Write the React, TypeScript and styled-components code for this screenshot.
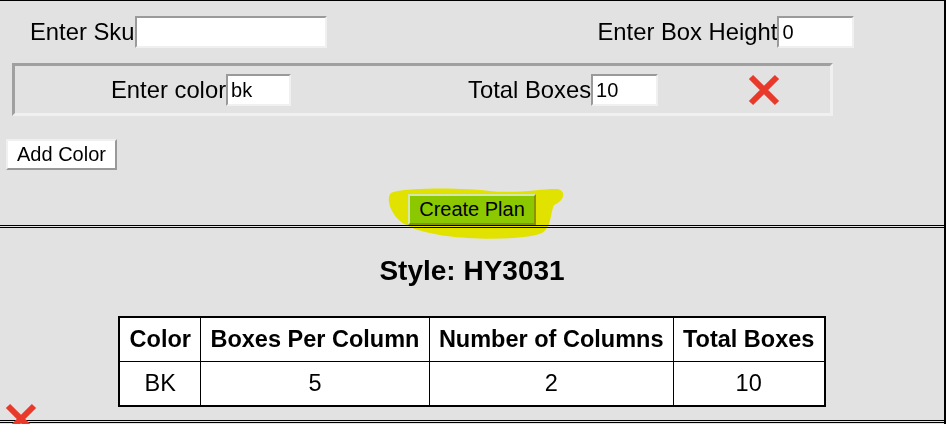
import React from "react";
import { createGlobalStyle, styled } from "styled-components";

const GlobalStyle = createGlobalStyle`
    html, body {
        margin: 0;
        padding: 0;
        background: #e2e2e2;
    }

    body {
        font-family: "Liberation Sans", Arial, sans-serif;
        color: #000;
    }
`;

const Page = styled.div`
    width: 946px;
    min-height: 424px;
    box-sizing: border-box;
    border-top: 1px solid #000;
    border-right: 2px solid #000;
    background: #e2e2e2;
`;

const FormSection = styled.section`
    position: relative;
    padding-top: 15px;
    border-bottom: 3px double #000;
`;

const Row = styled.div`
    display: flex;
    align-items: center;
    padding-left: 30px;
    gap: 271px;
`;

const Field = styled.label<{ $before?: number }>`
    display: flex;
    align-items: center;
    margin-left: ${(p) => p.$before ?? 0}px;
    font-size: 23.8px;
`;

const TextInput = styled.input<{ $w: number }>`
    width: ${(p) => p.$w}px;
    height: 32px;
    box-sizing: border-box;
    padding: 1px 3px;
    font: 20px "Liberation Sans", Arial, sans-serif;
    color: #000;
    background: #fff;
    border: 2px solid;
    border-color: #9a9a9a #f0f0f0 #f0f0f0 #9a9a9a;
    outline: none;
`;

const ColorBox = styled.div`
    display: flex;
    align-items: center;
    width: 821px;
    box-sizing: border-box;
    margin: 15px 0 0 12px;
    padding: 8px 0 7px 96px;
    border: 3px solid;
    border-color: #a0a0a0 #f0f0f0 #f0f0f0 #a0a0a0;
`;

const RemoveButton = styled.span<{ $before?: number }>`
    display: inline-flex;
    margin-left: ${(p) => p.$before ?? 0}px;
    cursor: pointer;
`;

const ButtonRow = styled.div<{ $top: number; $center?: boolean }>`
    display: flex;
    justify-content: ${(p) => (p.$center ? "center" : "flex-start")};
    margin-top: ${(p) => p.$top}px;
    padding-left: ${(p) => (p.$center ? 0 : 6)}px;
`;

const Button = styled.button`
    height: 31px;
    padding: 0 9px;
    font: 20px "Liberation Sans", Arial, sans-serif;
    color: #000;
    background: #fff;
    border: 2px solid;
    border-color: #f0f0f0 #999 #999 #f0f0f0;
`;

const PlanButton = styled(Button)`
    position: relative;
    z-index: 3;
    background: #8cc800;
    border-color: #d6e6b0 #8a9400 #8a9400 #d6e6b0;
`;

const Highlight = styled.svg`
    position: absolute;
    left: 386px;
    top: 183px;
    z-index: 2;
    mix-blend-mode: multiply;
    pointer-events: none;
`;

const PlanSection = styled.section`
    position: relative;
    padding: 27px 0 13px;
    border-bottom: 3px double #000;
`;

const PlanTitle = styled.h2`
    margin: 0;
    font-size: 28px;
    line-height: 32px;
    font-weight: bold;
    text-align: center;
`;

const PlanTable = styled.table`
    margin: 29px auto 0;
    border-collapse: collapse;
    border: 2px solid #000;
    background: #fff;
`;

const Cell = styled.td<{ $head?: boolean }>`
    border: 1px solid #000;
    padding: 0 9.25px;
    line-height: 43px;
    font-size: 23.5px;
    font-weight: ${(p) => (p.$head ? "bold" : "normal")};
    text-align: center;
    white-space: nowrap;
`;

const PlanRemove = styled.span`
    position: absolute;
    left: 4px;
    top: 175px;
    display: inline-flex;
`;

function RedX() {
    return (
        <svg width="34" height="32" viewBox="0 0 34 32">
            <path
                d="M4 3 L30 29 M30 3 L4 29"
                stroke="#e8392a"
                strokeWidth="6"
                fill="none"
            />
        </svg>
    );
}

const columns = ["Color", "Boxes Per Column", "Number of Columns", "Total Boxes"];
const rows = [["BK", "5", "2", "10"]];

export default function App() {
    return (
        <Page>
            <GlobalStyle />
            <FormSection>
                <Row>
                    <Field>
                        Enter Sku
                        <TextInput $w={192} defaultValue="" />
                    </Field>
                    <Field>
                        Enter Box Height
                        <TextInput $w={77} defaultValue="0" />
                    </Field>
                </Row>

                <ColorBox>
                    <Field>
                        Enter color
                        <TextInput $w={65} defaultValue="bk" />
                    </Field>
                    <Field $before={177}>
                        Total Boxes
                        <TextInput $w={67} defaultValue="10" />
                    </Field>
                    <RemoveButton $before={89}>
                        <RedX />
                    </RemoveButton>
                </ColorBox>

                <ButtonRow $top={23}>
                    <Button>Add Color</Button>
                </ButtonRow>

                <ButtonRow $top={24} $center>
                    <PlanButton>Create Plan</PlanButton>
                </ButtonRow>

                <Highlight width="182" height="60" viewBox="0 0 182 60">
                    <path
                        d="M5 9 C20 3 80 4 104 7 S160 4 172 5 C180 7 179 16 168 21 C164 30 166 42 156 49 C140 56 90 56 60 52 C40 49 20 44 12 35 C4 27 0 14 5 9 Z"
                        fill="#ffff00"
                    />
                </Highlight>
            </FormSection>

            <PlanSection>
                <PlanTitle>Style: HY3031</PlanTitle>
                <PlanTable>
                    <thead>
                        <tr>
                            {columns.map((c) => (
                                <Cell as="th" $head key={c}>
                                    {c}
                                </Cell>
                            ))}
                        </tr>
                    </thead>
                    <tbody>
                        {rows.map((r, i) => (
                            <tr key={i}>
                                {r.map((v, j) => (
                                    <Cell key={j}>{v}</Cell>
                                ))}
                            </tr>
                        ))}
                    </tbody>
                </PlanTable>
                <PlanRemove>
                    <RedX />
                </PlanRemove>
            </PlanSection>
        </Page>
    );
}
